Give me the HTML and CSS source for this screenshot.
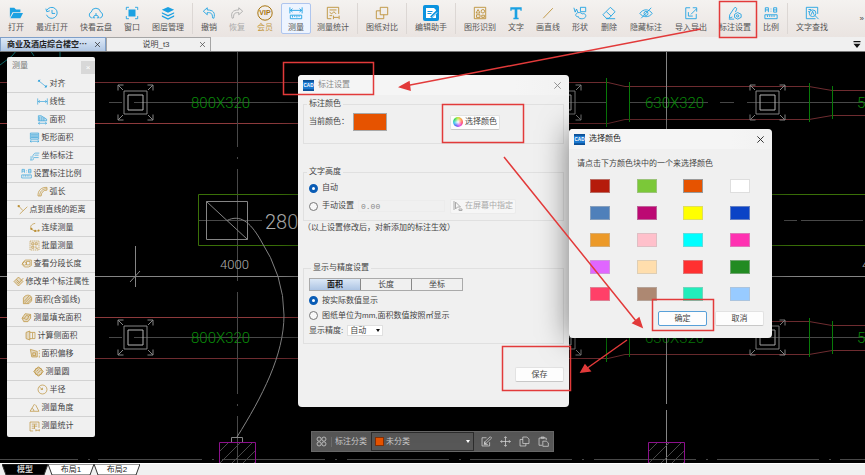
FILE: index.html
```html
<!DOCTYPE html>
<html lang="zh-CN">
<head>
<meta charset="utf-8">
<title>标注设置</title>
<link rel="stylesheet" href="styles.css">
</head>
<body>
<svg class="defs" aria-hidden="true">
  <symbol id="i-open" viewBox="0 0 16 16"><path class="f" d="M1 2h5l2 2h5v3H4L1 13zM5 8h11l-3 6H1.500z"/></symbol>
  <symbol id="i-recent" viewBox="0 0 16 16"><path d="M2 5a6.300 6.300 0 1 1-.3 5M1 3l1 3.500 3.500-1M8 4.500V8.500h3.500"/></symbol>
  <symbol id="i-cloud" viewBox="0 0 18 16"><path d="M5 13.500H4A3.400 3.400 0 0 1 3.500 7 5.500 5.500 0 0 1 14.300 7 3.400 3.400 0 0 1 14 13.500h-1M6 13.500a3 3 0 0 1 6 0M6 13.500h2M10 13.500h2M9 10.500V8"/></symbol>
  <symbol id="i-window" viewBox="0 0 16 16"><path class="f" d="M4 4h8v8H4z"/><path d="M1.500 4.500v-3h3M11.500 1.500h3v3M14.500 11.500v3h-3M4.500 14.500h-3v-3"/></symbol>
  <symbol id="i-layers" viewBox="0 0 16 16"><path class="f" d="M8 1l7 3.300-7 3.300L1 4.300zM1 7l7 3.300L15 7v1.700L8 12 1 8.700zM1 10.600l7 3.300 7-3.300v1.700L8 15.600 1 12.300z"/></symbol>
  <symbol id="i-undo" viewBox="0 0 16 16"><path d="M6 2L1.500 6 6 10V7.500c4 0 6 .5 6 6l1.500.5c2-6-.5-9.500-7.500-9.500z"/></symbol>
  <symbol id="i-redo" viewBox="0 0 16 16"><path d="M10 2l4.500 4L10 10V7.500c-4 0-6 .5-6 6L2.500 14C.5 8 3 4.500 10 4.500z"/></symbol>
  <symbol id="i-measure" viewBox="0 0 16 16"><path d="M1 1.500v7M15 1.500v7M1.500 5h13M4 3L1.800 5 4 7M12 3l2.200 2L12 7M1.500 10.500h13v4h-13zM4 11v2M6.500 11v1.500M9 11v2M11.500 11v1.500"/></symbol>
  <symbol id="i-stat" viewBox="0 0 16 16"><path d="M6 14.500H1.500v-13h13V9M4 4.500h8M4 7l2.500 2L9 6.500 11.500 9M4 11h3M8.500 11v4M15 11v4M9 13h5.500"/></symbol>
  <symbol id="i-compare" viewBox="0 0 16 16"><path d="M6 1.500h8.500V10H6zM6 5.500H1.500v9H10V10"/></symbol>
  <symbol id="i-edit" viewBox="0 0 16 16"><rect width="16" height="16" rx="2" fill="#0b93df" stroke="none"/><path d="M3 3h8l2 2v8H3z" fill="#fff" stroke="none"/><path d="M4.500 6.500h5M4.500 8.500h4" stroke="#0b93df"/><path d="M8 12.500l6-6" stroke="#0b93df" stroke-width="2.500"/><path d="M9 12.500l5-5" stroke="#fff"/></symbol>
  <symbol id="i-recog" viewBox="0 0 16 16"><path d="M1.500 1.500h13v13h-13zM3.500 8l2.300-4L8 8zM4 10h4v3H4zM10 10.500h3v2.500h-3z"/><circle cx="11.300" cy="6" r="2"/></symbol>
  <symbol id="i-text" viewBox="0 0 16 16"><path class="f" d="M1.500 1.500h13v4H13V4H9.500v9.500H11V15H5v-1.500h1.500V4H3v1.500H1.500z"/></symbol>
  <symbol id="i-line" viewBox="0 0 16 16"><path d="M2.500 14L13.500 2.500"/></symbol>
  <symbol id="i-shape" viewBox="0 0 16 16"><path d="M8.500 1.500h6v5h-6zM1 2l1.500 5L4 3.500 5.500 7"/><path d="M4 8.500c-2 2 0 4.500 2 3.500 0 3 6 3.500 8 1 2-3-1-5-3.500-4C9 7 5 7 4 8.500z"/></symbol>
  <symbol id="i-erase" viewBox="0 0 16 16"><path d="M9.500 1.500l5.500 5-7 7.500H5L1 10zM5 6.500l5.500 5M4.500 14.500H15"/></symbol>
  <symbol id="i-hide" viewBox="0 0 16 16"><path d="M1 8.500c3.500-5.500 10.500-5.500 14 0-3.500 5-10.500 5-14 0zM14 2L2.500 14"/><circle cx="8" cy="8.500" r="2.300"/></symbol>
  <symbol id="i-io" viewBox="0 0 16 16"><path d="M7 2H2v12.500h12V9M8 9.500l6-6M10 2h4.500v4.500M5 7v4.500h5"/></symbol>
  <symbol id="i-set" viewBox="0 0 16 16"><path d="M7 2.500L2 10l-.5 4 3.500-1.500M7 2.500c1-1.800 3.500-.5 2.800 1.300L8.500 7M1 15h6"/><path d="M11 7.500l4 2v3.500l-4 2-3.500-2V9.500z"/><circle cx="11" cy="11.300" r="1.300"/></symbol>
  <symbol id="i-ratio" viewBox="0 0 16 16"><path d="M1.500 7V2h3.500v5M1.500 4.500H5M8 3v.8M8 5.500v.8M11 2h3.500v5H11zM11 4.500h3.500M1 10h14v4.500H1zM4 10.500v2M6.500 10.500v2M9 10.500v2M11.500 10.500v2"/></symbol>
  <symbol id="i-find" viewBox="0 0 16 16"><path d="M12 14.500H1.500v-13h13V9M4 4h3M3.500 6.500H5M11.500 11l4 4"/><circle cx="8.700" cy="8.300" r="3.800"/><path d="M7 10l1.700-4L10.400 10"/></symbol>
  <symbol id="m-align" viewBox="0 0 16 16"><path d="M3 4.500l10 8M1.500 5.500l3-3M11.500 14l3-3.500"/><circle class="f" cx="3" cy="4" r="1.500"/><circle class="f" cx="13" cy="12.500" r="1.500"/></symbol>
  <symbol id="m-linear" viewBox="0 0 16 16"><path d="M1 3.500v9M15 3.500v9M1.500 8h13M4 6L2 8l2 2M12 6l2 2-2 2"/></symbol>
  <symbol id="m-area" viewBox="0 0 16 16"><path class="t" d="M2 2.500h4l8 5v2.500H2z"/><path d="M2 13.500h12M4 12l-2 1.500L4 15M12 12l2 1.500-2 1.500M4 4v6M7 4v6M10 5v5"/></symbol>
  <symbol id="m-rect" viewBox="0 0 16 16"><path class="t" d="M2 1.500h12v9H2z"/><path d="M1.500 13.500h13M3.500 12l-2 1.500 2 1.500M12.500 12l2 1.500-2 1.500M3 4h10M3 6h10M3 8h10"/></symbol>
  <symbol id="m-coord" viewBox="0 0 16 16"><path d="M1.500 14.500h4c2-1 0-3 0-5s2-5 4-5H15M8 7.500h6M7 11h7M3 9v5"/></symbol>
  <symbol id="m-arc" viewBox="0 0 16 16"><path d="M1.500 14.500C1 7 6 1.500 14.500 2v4C9 6 6.500 9 6 14.500zM4 14c0-6 4-10 10-10"/></symbol>
  <symbol id="m-dist" viewBox="0 0 16 16"><path d="M4 14.500L15 4M2.500 3l6 6.500"/><circle class="f" cx="2.500" cy="3" r="1.700"/></symbol>
  <symbol id="m-cont" viewBox="0 0 16 16"><path d="M9 2C3 3 1 7 3.500 10.500L8 13h5"/><circle class="f" cx="3.500" cy="10" r="1.600"/><circle class="f" cx="9" cy="13" r="1.600"/><circle class="f" cx="14" cy="12.500" r="1.500"/></symbol>
  <symbol id="m-batch" viewBox="0 0 16 16"><path stroke-dasharray="2 1" d="M1.500 1.500h13v13h-13z"/><path d="M4 4h3v3H4zM9 4h3v3H9zM4 9h3v3H4zM10 9v3h3"/></symbol>
  <symbol id="m-seg" viewBox="0 0 16 16"><path d="M6 3h9v8l-4 2H5L1.500 9zM8 5h5v5H8z"/><circle cx="5" cy="8" r="2.500"/></symbol>
  <symbol id="m-prop" viewBox="0 0 16 16"><path class="t" d="M8 1.500L14.500 8 8 14.500 1.500 8z"/><path d="M5 8l3 3 7-8M5 5l4 4"/></symbol>
  <symbol id="m-arcarea" viewBox="0 0 16 16"><path class="t" d="M2 14V6c2-5 10-6 12-1v5l-4 4z"/><path d="M3 11l7-8M4 13l9-9M8 13l6-6"/></symbol>
  <symbol id="m-fill" viewBox="0 0 16 16"><path class="t" d="M1.500 9L6 2.500l8 1V9l-4 5H4z"/><path d="M5 9l3-4 3 1-1 4-3 1zM2 9h3M11 6l3-2"/></symbol>
  <symbol id="m-side" viewBox="0 0 16 16"><path class="t" d="M1.500 3.500L7 1.500v13l-5.500-2z"/><path d="M7 3.500h7.500v9H7M11 4v8"/></symbol>
  <symbol id="m-offset" viewBox="0 0 16 16"><path class="t" d="M2 2l10 3v8H4zM5.500 7h4v4h-4z"/><path d="M15 3v2M15 7v2M15 11v3"/></symbol>
  <symbol id="m-circle" viewBox="0 0 16 16"><circle class="t" cx="8" cy="8" r="5.500"/><path d="M8 1L15 8 8 15 1 8zM5 8l3-3M6 11l5-5"/></symbol>
  <symbol id="m-radius" viewBox="0 0 16 16"><circle cx="8" cy="8" r="6.500"/><path d="M8 8L3.500 4.500M5.500 8H8V5.500"/></symbol>
  <symbol id="m-angle" viewBox="0 0 16 16"><path d="M8 3L1.500 13.500h13L9.500 4M4 10c2-1 3 1 3 3"/></symbol>
  <symbol id="m-total" viewBox="0 0 16 16"><path d="M6 14.500H1.500v-13h13V10M4 4.500h8M4 7.500h8M4 10.500h5M8 5v6M10 12v3M15 12v3M10 13.500h5"/></symbol>
  <symbol id="i-close" viewBox="0 0 10 10"><path d="M1.500 1.500l7 7M8.500 1.500l-7 7"/></symbol>
  <symbol id="b-grid" viewBox="0 0 16 16"><circle cx="4.500" cy="4.500" r="3"/><circle cx="11.500" cy="4.500" r="3"/><circle cx="4.500" cy="11.500" r="3"/><circle cx="11.500" cy="11.500" r="3"/></symbol>
  <symbol id="b-edit" viewBox="0 0 16 16"><path d="M8 2.500H1.500v12h11V9M5 11l1-3 7.500-7L15.500 3 8 10zM4 12.500h6M5 8v3h3"/></symbol>
  <symbol id="b-move" viewBox="0 0 16 16"><path d="M8 1v14M1 8h14M6 3l2-2 2 2M6 13l2 2 2-2M3 6L1 8l2 2M13 6l2 2-2 2"/></symbol>
  <symbol id="b-copy" viewBox="0 0 16 16"><path d="M5.500 1.500h6l3 3v6.500h-9zM5.500 5h-4v9.500h8.500V11"/></symbol>
  <symbol id="b-paste" viewBox="0 0 16 16"><path d="M6 13.500H1.500V3H12v3M4.500 3V1.500H9V3zM7 7.500h5l3 2.500v5H7z"/></symbol>
</svg>

<div class="app">
  <header class="toolbar">
    <div class="group">
      <button class="tool"><svg><use href="#i-open"/></svg>打开</button>
      <button class="tool"><svg><use href="#i-recent"/></svg>最近打开</button>
      <button class="tool"><svg><use href="#i-cloud"/></svg>快看云盘</button>
      <button class="tool"><svg><use href="#i-window"/></svg>窗口</button>
      <button class="tool"><svg><use href="#i-layers"/></svg>图层管理</button>
    </div>
    <div class="group">
      <button class="tool"><svg><use href="#i-undo"/></svg>撤销</button>
      <button class="tool muted"><svg><use href="#i-redo"/></svg>恢复</button>
      <button class="tool vip"><svg viewBox="0 0 16 16"><circle cx="8" cy="8" r="7.200"/><text x="8" y="10.400" text-anchor="middle" class="vip-text">VIP</text></svg>会员</button>
      <button class="tool active"><svg><use href="#i-measure"/></svg>测量</button>
      <button class="tool gold"><svg><use href="#i-stat"/></svg>测量统计</button>
    </div>
    <div class="group">
      <button class="tool gold"><svg><use href="#i-compare"/></svg>图纸对比</button>
    </div>
    <div class="group">
      <button class="tool helper"><svg><use href="#i-edit"/></svg>编辑助手</button>
    </div>
    <div class="group">
      <button class="tool gold"><svg><use href="#i-recog"/></svg>图形识别</button>
      <button class="tool"><svg><use href="#i-text"/></svg>文字</button>
      <button class="tool gold"><svg><use href="#i-line"/></svg>画直线</button>
      <div class="subgroup">
        <button class="tool"><svg><use href="#i-shape"/></svg>形状</button>
        <button class="tool"><svg><use href="#i-erase"/></svg>删除</button>
        <button class="tool"><svg><use href="#i-hide"/></svg>隐藏标注</button>
        <button class="tool"><svg><use href="#i-io"/></svg>导入导出</button>
      </div>
      <button class="tool"><svg><use href="#i-set"/></svg>标注设置</button>
      <button class="tool"><svg><use href="#i-ratio"/></svg>比例</button>
    </div>
    <div class="group">
      <button class="tool"><svg><use href="#i-find"/></svg>文字查找</button>
    </div>
    <button class="more" aria-label="更多">»</button>
  </header>

  <nav class="files">
    <div class="file current"><button class="file-name">商业及酒店综合楼空⋯</button><button class="x" aria-label="关闭"><svg><use href="#i-close"/></svg></button></div>
    <div class="file"><button class="file-name">说明_t3</button><button class="x" aria-label="关闭"><svg><use href="#i-close"/></svg></button></div>
    <button class="file-list" aria-label="文件列表"><svg viewBox="0 0 8 8"><path d="M0 0h8v1.500H0zM0 3h8L4 8z"/></svg></button>
  </nav>

  <main class="workspace">
    <svg class="drawing" aria-hidden="true">
      <defs>
        <g id="column">
          <path class="white" d="M-11.500-11.500h23v23h-23zM-17.500-12v-5.500h5.500M-17.500-17.500l5 5M17.500-12v-5.500h-5.500M17.500-17.500l-5 5M-17.500 12v5.500h5.500M-17.500 17.500l5-5M17.500 12v5.500h-5.500M17.500 17.500l-5-5"/>
          <path class="bright" d="M-7.500-7.500h15v15h-15z"/>
        </g>
        <g id="beams">
          <path class="red" d="M0 82.500H608L625 86.500H809L832 90.500H2000M0 123.500H608L625 119.500H809L832 115.500H2000"/>
          <path class="gray" d="M109 102.500h13M134 102.500H606M629 102.500h79M720 102.500h14M747 102.500H2000"/>
          <path class="green" d="M606.500 78v49M629.500 82v40M809.500 83v39M832.500 86v33"/>
          <use href="#column" x="135.500" y="102.500"/>
          <use href="#column" x="563.500" y="102.500"/>
          <use href="#column" x="767.500" y="102.500"/>
        </g>
        <g id="hatch">
          <path class="gray" d="M0 10L10 0M0 22L22 0M9 25L34 0M20 25L36 9M31 25l5-5"/>
          <path class="purple" d="M.5 25V.5h36V25"/>
        </g>
      </defs>
      <g transform="translate(0 -52)">
        <path class="cyan" d="M0 65l12-9 5-6M30 50l4 6M60 50v8"/>
        <use href="#beams"/>
        <use href="#beams" y="235"/>
        <g class="beam-text">
          <text x="191" y="108">800X320</text>
          <text x="645" y="108">630X320</text>
          <text x="857" y="108">5</text>
          <text x="191" y="343">800X320</text>
          <text x="645" y="343">630X320</text>
          <text x="857" y="343">5</text>
        </g>
        <path class="red strong" d="M0 123.500H300M0 317.500H300"/>
        <path class="gray" d="M237.500 52v95M237.500 157v2M237.500 169v112M237.500 292v102M237.500 404v2M237.500 416v48M198 220.500h64M0 459.500h78M88 459.500h2M98 459.500h104M212 459.500h2M222 459.500h103M335 459.500h2M347 459.500h102M459 459.500h2M470 459.500h102M582 459.500h2M594 459.500h102M706 459.500h2M717 459.500h102M829 459.500h2M840 459.500h102M784 220.500h13M801 220.500h62"/>
        <path class="white" d="M0 276.500H2000M135.500 246v41M130 282l10-11M666.500 52v352M666.500 410v54"/>
        <path class="olive" d="M2000 194.500H198.500v51H2000"/>
        <path class="white" d="M206.500 201.500h41v38h-41zM206.500 201.500l41 38M227 220.500C240 214 250 222 260 239 Q284 276 284 315C284 355 262 397 237 437M231.500 437.500h11v5h-11z"/>
        <g class="dim-text">
          <text class="large" x="265" y="229">280</text>
          <text x="220" y="269">4000</text>
          <text x="862" y="269">4</text>
        </g>
        <use href="#hatch" x="219" y="442"/>
        <use href="#hatch" x="648" y="442"/>
      </g>
    </svg>

    <section class="palette" aria-label="测量">
      <header><span>测量</span><button aria-label="关闭">×</button></header>
      <button><svg><use href="#m-align"/></svg>对齐</button>
      <button><svg><use href="#m-linear"/></svg>线性</button>
      <button><svg><use href="#m-area"/></svg>面积</button>
      <button><svg><use href="#m-rect"/></svg>矩形面积</button>
      <button><svg><use href="#m-coord"/></svg>坐标标注</button>
      <button><svg><use href="#i-ratio"/></svg>设置标注比例</button>
      <button class="gold"><svg><use href="#m-arc"/></svg>弧长</button>
      <button class="gold"><svg><use href="#m-dist"/></svg>点到直线的距离</button>
      <button class="gold"><svg><use href="#m-cont"/></svg>连续测量</button>
      <button class="gold"><svg><use href="#m-batch"/></svg>批量测量</button>
      <button class="gold"><svg><use href="#m-seg"/></svg>查看分段长度</button>
      <button class="gold"><svg><use href="#m-prop"/></svg>修改单个标注属性</button>
      <button class="gold"><svg><use href="#m-arcarea"/></svg>面积(含弧线)</button>
      <button class="gold"><svg><use href="#m-fill"/></svg>测量填充面积</button>
      <button class="gold"><svg><use href="#m-side"/></svg>计算侧面积</button>
      <button class="gold"><svg><use href="#m-offset"/></svg>面积偏移</button>
      <button class="gold"><svg><use href="#m-circle"/></svg>测量圆</button>
      <button class="gold"><svg><use href="#m-radius"/></svg>半径</button>
      <button class="gold"><svg><use href="#m-angle"/></svg>测量角度</button>
      <button class="gold"><svg><use href="#m-total"/></svg>测量统计</button>
    </section>

    <div class="category">
      <button aria-label="全部分类"><svg><use href="#b-grid"/></svg></button>
      <label for="cat">标注分类</label>
      <span class="combo"><i></i><select id="cat"><option>未分类</option></select></span>
      <div class="category-tools">
        <button aria-label="编辑"><svg><use href="#b-edit"/></svg></button>
        <button aria-label="移动"><svg><use href="#b-move"/></svg></button>
        <button aria-label="复制"><svg><use href="#b-copy"/></svg></button>
        <button aria-label="粘贴"><svg><use href="#b-paste"/></svg></button>
      </div>
    </div>

    <section class="dialog settings" role="dialog" aria-labelledby="t1">
      <header><svg class="logo" viewBox="0 0 12 12"><rect width="12" height="12" fill="#1b78cf" stroke="none"/><path d="M0 0h12v2H0zM0 10h12v2H0z" fill="#0d4f95" stroke="none"/><text x="6" y="7.800" text-anchor="middle" class="app-text">CAD</text></svg><h1 id="t1">标注设置</h1><button class="x" aria-label="关闭"><svg><use href="#i-close"/></svg></button></header>
      <form>
        <fieldset class="color-set">
          <legend>标注颜色</legend>
          <div class="row"><div class="lead"><span>当前颜色：</span><span class="current-color"></span></div>
            <button type="button" class="btn"><span class="wheel"></span>选择颜色</button></div>
        </fieldset>
        <fieldset class="height-set">
          <legend>文字高度</legend>
          <div class="row"><label><input type="radio" name="h" checked>自动</label></div>
          <div class="row"><div class="lead"><label><input type="radio" name="h">手动设置</label><input class="num" aria-label="文字高度" value="0.00" disabled></div>
            <button type="button" class="btn" disabled><svg viewBox="0 0 10 10"><path d="M1 0v9M2.500 1v7l2-2h3zM6 8h3v1.500H6z"/></svg>在屏幕中指定</button></div>
        </fieldset>
        <p class="note">（以上设置修改后，对新添加的标注生效）</p>
        <fieldset class="precision-set">
          <legend>显示与精度设置</legend>
          <div class="segments"><button type="button" class="on">面积</button><button type="button">长度</button><button type="button">坐标</button></div>
          <div class="row"><label><input type="radio" name="d" checked>按实际数值显示</label></div>
          <div class="row"><label><input type="radio" name="d">图纸单位为mm,面积数值按照㎡显示</label></div>
          <div class="row"><label for="prec">显示精度:</label><select id="prec"><option>自动</option></select></div>
        </fieldset>
        <div class="actions"><button type="button" class="btn">保存</button></div>
      </form>
    </section>

    <section class="dialog picker" role="dialog" aria-labelledby="t2">
      <header><svg class="logo" viewBox="0 0 12 12"><rect width="12" height="12" fill="#1b78cf" stroke="none"/><path d="M0 0h12v2H0zM0 10h12v2H0z" fill="#0d4f95" stroke="none"/><text x="6" y="7.800" text-anchor="middle" class="app-text">CAD</text></svg><h2 id="t2">选择颜色</h2><button class="x" aria-label="关闭"><svg><use href="#i-close"/></svg></button></header>
      <p>请点击下方颜色块中的一个来选择颜色</p>
      <div class="swatches">
        <button aria-label="深红" style="background:#b51b0b"></button><button aria-label="草绿" style="background:#7bc838"></button><button aria-label="橙" class="chosen" style="background:#e65300"></button><button aria-label="白" style="background:#ffffff"></button>
        <button aria-label="钢蓝" style="background:#4f80ba"></button><button aria-label="紫红" style="background:#bc0873"></button><button aria-label="黄" style="background:#ffff00"></button><button aria-label="蓝" style="background:#0b43c6"></button>
        <button aria-label="橘黄" style="background:#ec9928"></button><button aria-label="粉" style="background:#ffc0cb"></button><button aria-label="青" style="background:#00ffff"></button><button aria-label="桃红" style="background:#ff31b1"></button>
        <button aria-label="淡紫" style="background:#e066ff"></button><button aria-label="米黄" style="background:#ffdead"></button><button aria-label="红" style="background:#ff3030"></button><button aria-label="绿" style="background:#228b22"></button>
        <button aria-label="玫红" style="background:#ff4068"></button><button aria-label="棕" style="background:#ad8872"></button><button aria-label="碧绿" style="background:#22edbb"></button><button aria-label="天蓝" style="background:#98cbff"></button>
      </div>
      <div class="actions"><button class="btn primary">确定</button><button class="btn">取消</button></div>
    </section>
  </main>

  <footer class="sheets">
    <button class="sheet model"><svg viewBox="0 0 46 11" preserveAspectRatio="none"><path d="M0 0h46l-4 11H4z"/></svg><span>模型</span></button>
    <button class="sheet"><svg viewBox="0 0 46 11" preserveAspectRatio="none"><path d="M0 0h46l-4 11H4z"/></svg><span>布局1</span></button>
    <button class="sheet"><svg viewBox="0 0 46 11" preserveAspectRatio="none"><path d="M0 0h46l-4 11H4z"/></svg><span>布局2</span></button>
  </footer>

  <svg class="callouts" aria-hidden="true" stroke-width="1.5">
    <path d="M719.500 1.500h37v36h-37zM283.500 62.500h90v32h-90zM442.500 104.500h81v38h-81zM652.500 299.500h61v31h-61zM502.500 346.500h68v44h-68z"/>
    <path d="M701 29L405 86M504 157L636 321M627 340L586 369"/>
    <path class="head" d="M400 87l9-5 1 8zM642 327l-9-4 6-5zM581 372l4-7 5 6z"/>
  </svg>
</div>
</body>
</html>
```
FILE: styles.css
```css
* { box-sizing: border-box; }

body {
  margin: 0;
  font: 8px/10px "Liberation Sans", "Noto Sans CJK SC", sans-serif;
  color: #444;
  background: #f0f0f0;
}

button, input, select {
  margin: 0;
  padding: 0;
  border: 0;
  background: none;
  font: inherit;
  color: inherit;
}

h1, h2, p { margin: 0; font-size: 8px; font-weight: 400; }

svg { fill: none; stroke: currentColor; display: block; }
svg .f { fill: currentColor; stroke: none; }
svg .t { fill: currentColor; fill-opacity: .25; }

.defs { position: absolute; width: 0; height: 0; }
.vip-text { font: bold 7px "Liberation Sans", sans-serif; fill: currentColor; stroke: none; }
.app-text { font: bold 5px "Liberation Sans", sans-serif; fill: #fff; stroke: none; }

.app {
  position: relative;
  display: flex;
  flex-direction: column;
  min-height: 100vh;
  overflow: hidden;
}

/* Toolbar */
.toolbar {
  display: flex;
  align-items: center;
  height: 37px;
  flex: none;
  background: linear-gradient(#f4f2f0, #eae4e1);
}
.group { display: flex; align-items: center; padding: 0 2px; }
.group + .group { border-left: 1px solid #dcd7d4; }
.subgroup { display: flex; gap: 1px; }
.tool {
  display: flex;
  flex-direction: column;
  align-items: center;
  gap: 3px;
  height: 31px;
  padding: 3px 6px 0;
  white-space: nowrap;
  color: #555;
}
.tool svg { width: 16px; height: 14px; color: #1ba1e2; }
.tool.gold svg { color: #bb8f35; }
.tool.muted, .tool.muted svg { color: #aaa; }
.tool.vip { color: #c49a45; padding-top: 2px; gap: 2px; }
.tool.vip svg { width: 16px; height: 16px; color: #a87510; }
.tool.helper { padding-top: 2px; gap: 2px; }
.tool.helper svg { height: 16px; }
.tool.active {
  margin-left: 2px;
  padding-top: 2px;
  border: 1px solid #aec5ee;
  border-radius: 2px;
  background: #edf4ff;
}
.more { margin-left: auto; padding: 0 1px; }

/* Open files */
.files {
  display: flex;
  height: 15px;
  flex: none;
  border-bottom: 1px solid #777;
}
.file {
  display: flex;
  align-items: center;
  width: 105px;
  padding: 0 4px 0 6px;
  border: 1px solid #a5a5a5;
  border-bottom: 0;
}
.file.current {
  width: 106px;
  font-weight: 700;
  color: #222;
  background: linear-gradient(#dce8f6, #b2c8e4);
  border-color: #7f9fc8;
}
.file-name { flex: 1; white-space: nowrap; }
.current .file-name { text-align: left; }
.x svg { width: 7px; height: 7px; }
.file-list { margin-left: auto; padding-right: 4px; }
.file-list svg { width: 8px; height: 7px; fill: #111; stroke: none; }

/* Drawing area */
.workspace { position: relative; flex: 1; min-height: 411px; background: #000; overflow: hidden; }
.drawing { position: absolute; inset: 0; width: 100%; height: 100%; }
.red { stroke: #6e2c30; }
.red.strong { stroke: #8d3a3c; }
.gray { stroke: #484848; }
.white { stroke: #858585; }
.bright { stroke: #b5b5b5; }
.green { stroke: #087a08; }
.olive { stroke: #3a7008; }
.purple { stroke: #8c108c; }
.cyan { stroke: #0c6868; }
.beam-text, .dim-text { font: 300 15px Roboto, sans-serif; fill: #0a8c0a; stroke: none; }
.dim-text { font-size: 13px; fill: #b0b0b0; }
.dim-text .large { font-size: 20px; }

/* Measure palette */
.palette {
  position: absolute;
  left: 7px;
  top: 5px;
  width: 88px;
  padding-bottom: 2px;
  border-radius: 2px;
  background: #f0f0f0;
}
.palette header {
  display: flex;
  justify-content: space-between;
  height: 18px;
  padding-left: 5px;
  line-height: 18px;
  color: #777;
}
.palette header button { width: 14px; height: 13px; margin-top: 4px; line-height: 13px; background: #d8d8d8; color: #fff; }
.palette > button {
  display: flex;
  align-items: center;
  justify-content: center;
  gap: 2px;
  width: 100%;
  height: 18px;
  border-bottom: 1px solid #d2d2d2;
  white-space: nowrap;
}
.palette > button:last-child { border-bottom: 0; }
.palette > button svg { width: 11px; height: 11px; color: #38a5dc; }
.palette > button.gold svg { color: #bb8f35; }

/* Category bar */
.category {
  position: absolute;
  left: 311px;
  bottom: 11px;
  display: flex;
  align-items: center;
  gap: 4px;
  height: 21px;
  padding: 0 4px;
  border: 1px solid #686868;
  background: #575757;
  color: #c8c8c8;
}
.category svg { width: 11px; height: 11px; color: #e0e0e0; }
.category label { padding-left: 3px; border-left: 1px solid #6c6c6c; }
.combo {
  position: relative;
  display: flex;
  align-items: center;
  gap: 2px;
  width: 103px;
  height: 19px;
  padding: 0 3px;
  border: 1px solid #2c2c2c;
}
.combo i { width: 9px; height: 9px; background: #e65300; border: 1px solid #803008; }
.combo::after, .row:has(select)::after { content: ""; border: 2px solid transparent; border-top: 3px solid #fff; border-bottom: 0; }
.combo select { flex: 1; appearance: none; }
.category-tools { display: flex; gap: 8px; padding-left: 3px; }

/* Dialogs */
.dialog { position: absolute; border-radius: 4px; background: #f0f0f0; box-shadow: 0 0 30px rgba(0, 0, 0, .5); }
.dialog header {
  display: flex;
  align-items: center;
  gap: 4px;
  height: 20px;
  padding: 0 7px 0 5px;
  border-radius: 4px 4px 0 0;
  background: linear-gradient(90deg, #f5f5f5, #f5f5f5 80%, rgba(245, 245, 245, .3));
}
.dialog .logo { width: 11px; height: 11px; }
.dialog .x { margin-left: auto; }
.dialog .x svg { width: 9px; height: 9px; }
.settings { left: 298px; top: 23px; width: 271px; }
.settings header { color: #888; }
.settings form { padding: 4px 5px 25px; }
.picker { left: 569px; top: 77px; width: 203px; padding-bottom: 12px; }
.picker header { color: #222; }

fieldset { min-width: 0; margin: 0; border: 1px solid #e0e0e0; padding: 4px 5px 0; }
legend { height: 10px; margin-left: -2px; padding: 0 2px; }
.color-set { padding-bottom: 12px; }
.height-set { margin-top: 23px; padding-top: 2px; padding-bottom: 5px; }
.precision-set { margin-top: 30px; padding-top: 5px; padding-bottom: 5px; }
.precision-set legend { margin-left: 2px; }

.row { display: flex; align-items: center; height: 18px; white-space: nowrap; }
.precision-set .row { height: 15px; }
.row label { display: flex; align-items: center; gap: 4px; }
.lead { display: flex; align-items: center; gap: 4px; width: 141px; }
.current-color { width: 34px; height: 18px; border: 1px solid #a8a8a8; background: #e65300; }
input[type="radio"] {
  appearance: none;
  width: 9px;
  height: 9px;
  border: 1px solid #777;
  border-radius: 50%;
  background: #f8f8f8;
}
input[type="radio"]:checked { border: 3px solid #0a5cb5; background: #fff; }
.num { width: 87px; height: 12px; padding: 0 2px; border: 1px solid #ececec; color: #888; font-family: "Liberation Mono", monospace; }
.note { margin-top: 2px; line-height: 10px; }
.btn {
  display: flex;
  align-items: center;
  justify-content: center;
  gap: 2px;
  min-width: 49px;
  height: 15px;
  padding: 0 2px;
  border: 1px solid #e2e2e2;
  border-bottom-color: #c8c8c8;
  border-radius: 2px;
  background: #fdfdfd;
}
.btn:disabled { color: #aaa; background: #f6f6f6; border-color: #ebebeb; }
.btn svg { width: 10px; height: 10px; }
.btn.primary { border-color: #58a0d8; }
.wheel {
  width: 10px;
  height: 10px;
  border-radius: 50%;
  background: radial-gradient(#fff, transparent 60%), conic-gradient(#c3e63a, #ff9b50, #ff4e70, #e050f0, #5b62f5, #38c8ee, #32d860, #c3e63a);
}
.segments { display: flex; width: 154px; height: 13px; margin-bottom: 2px; border: 1px solid #aaa; }
.segments button { flex: 1; }
.segments button + button { border-left: 1px solid #888; }
.segments .on { font-weight: 700; color: #222; background: linear-gradient(#dce8f6, #adc5e4); }
#prec { appearance: none; width: 36px; height: 11px; margin-left: 4px; padding-left: 2px; border: 1px solid #e0e0e0; background: #fff; }
.row:has(select)::after { border-top-color: #111; margin-left: -7px; }
.actions { display: flex; justify-content: flex-end; }
.settings .actions { margin-top: 23px; }

.picker p { padding: 10px 8px 10px; }
.swatches {
  display: grid;
  grid-template-columns: repeat(4, 20px);
  grid-auto-rows: 14px;
  justify-content: space-between;
  row-gap: 13px;
  padding: 0 22px 0 21px;
}
.swatches button { border: 1px solid rgba(190, 190, 190, .5); }
.swatches .chosen { border-color: #999; }
.picker .actions { gap: 8px; padding: 10px 8px 0; }

/* Layout sheets */
.sheets { display: flex; height: 12px; flex: none; padding-left: 2px; border-top: 1px solid #fff; }
.sheet { position: relative; width: 46px; height: 11px; color: #222; }
.sheet svg { position: absolute; inset: 0; width: 100%; height: 100%; fill: #fff; stroke: #333; }
.sheet span { position: relative; }
.sheet.model { color: #ccc; font-weight: 700; }
.sheet.model svg { fill: #000; }

/* Red callouts above the windows */
.callouts { position: absolute; inset: 0; width: 100%; height: 100%; pointer-events: none; color: #e23a3a; }
.callouts .head { fill: currentColor; }
```
